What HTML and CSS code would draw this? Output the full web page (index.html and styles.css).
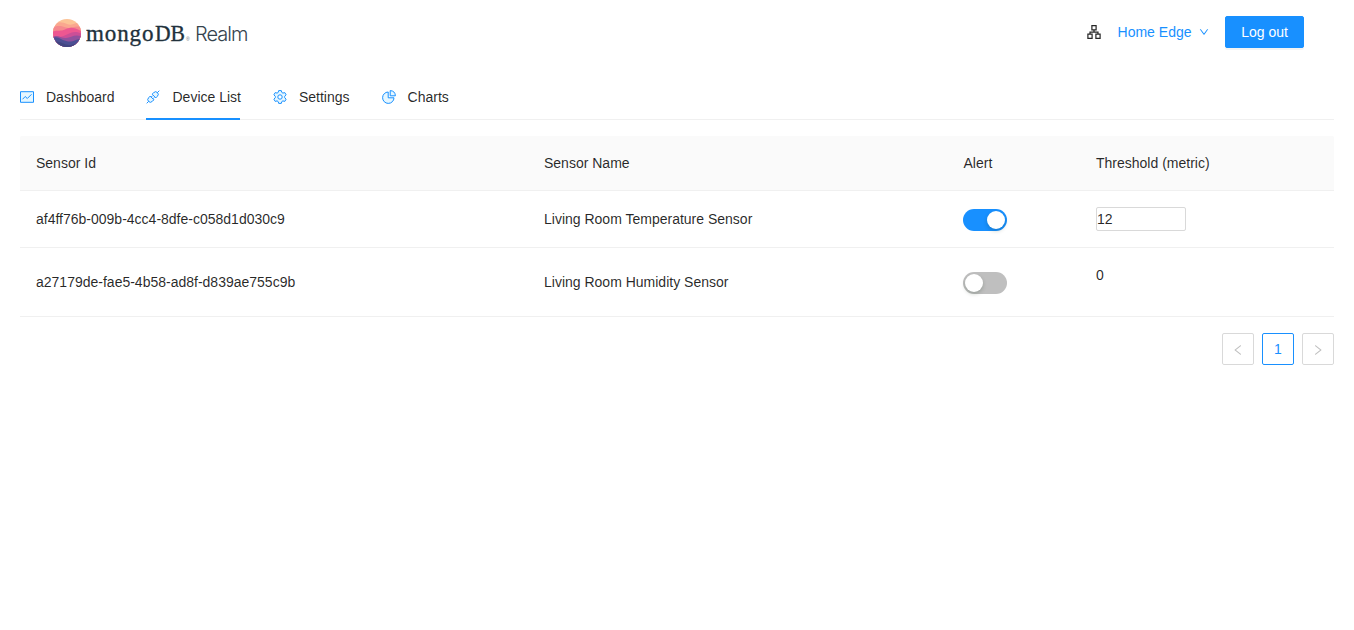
FILE: index.html
```html
<!DOCTYPE html>
<html lang="en">
<head>
<meta charset="utf-8">
<title>MongoDB Realm</title>
<link rel="stylesheet" href="styles.css">
</head>
<body>
<header class="header">
  <div class="brand">
    <svg class="brand-mark" viewBox="0 0 28 28">
      <defs><clipPath id="disc"><circle cx="14" cy="14" r="14"/></clipPath></defs>
      <g clip-path="url(#disc)">
        <rect width="28" height="28" fill="#fcc397"/>
        <path d="M0 6C5 2 9 3 14 5S22 4 28 3V28H0Z" fill="#faa78f"/>
        <path d="M0 8.500C5 6 9 7 13 8.500S22 6.500 28 8V28H0Z" fill="#f5898d"/>
        <path d="M0 12.500C5 11 8 12.500 12 10.500S20 7.500 28 12V28H0Z" fill="#ed5791"/>
        <path d="M0 18C6 18 9 18 14 15.500S22 12 28 14.500V28H0Z" fill="#cb4f97"/>
        <path d="M0 17.500C5 15.500 8 19.500 13 19S21 15 28 17V28H0Z" fill="#90519d"/>
        <path d="M0 19C5 16.500 9 22 15 22.500S23 20 28 20V28H0Z" fill="#4c4f93"/>
        <path d="M0 23C6 21 11 26 16 26S23 24 28 24V28H0Z" fill="#414681"/>
      </g>
    </svg>
    <svg class="brand-name" viewBox="0 0 164 32">
      <text class="mongo" x="0" y="23.500" textLength="67.500">mongo</text>
      <text class="mongo db" x="69" y="23.500" textLength="30" lengthAdjust="spacingAndGlyphs">DB</text>
      <text class="reg" x="100" y="23.500">®</text>
      <text class="realm" x="109" y="23.500" textLength="53.500">Realm</text>
    </svg>
  </div>
  <div class="account">
    <svg class="icon cluster" viewBox="0 0 14 14"><path d="M4.900.6h4.200v4.200H4.900ZM.9 9.200h4.200v4.200H.9ZM8.900 9.200h4.200v4.200H8.900ZM7 4.800v2.200M3 9.200V7.100h8v2.100"/></svg>
    <a class="edge">Home Edge
      <svg class="chevron" viewBox="64 64 896 896"><path d="M884 256h-75c-5.100 0-9.900 2.500-12.900 6.600L512 654.200 227.900 262.600c-3-4.100-7.800-6.600-12.900-6.600h-75c-6.500 0-10.300 7.400-6.500 12.700l352.600 486.100c12.800 17.600 39 17.600 51.700 0l352.600-486.100c3.900-5.300.1-12.700-6.400-12.700z"/></svg>
    </a>
    <button class="logout">Log out</button>
  </div>
</header>
<main class="content">
  <nav class="tabs">
    <a class="tab"><svg class="icon two-tone" viewBox="0 0 14 14"><path class="tint" d="M.5 1.700h13v10.600H.5Z"/><path d="M2.500 9.300 5.200 6.500 7.300 8.500 11.500 4.300"/></svg>Dashboard</a>
    <a class="tab active"><svg class="icon two-tone" viewBox="0 0 14 14"><path class="tint" d="M6.100 4.200 7.500 2.800A2.850 2.850 0 0 1 11.500 2.500 2.850 2.850 0 0 1 11.200 6.500L9.800 7.900ZM4.200 6.100 2.800 7.500A2.850 2.850 0 0 0 2.500 11.500 2.850 2.850 0 0 0 6.500 11.200L7.900 9.800Z"/><path d="M11.500 2.500 13.300.7M2.500 11.500.7 13.300M5.200 7.100 6.600 5.700M6.900 8.800 8.300 7.400"/></svg>Device List</a>
    <a class="tab"><svg class="icon two-tone" viewBox="0 0 14 14"><path class="tint" d="M5.700.6h2.600l.5 1.800 1.100.7 1.900-.5 1.300 2.200-1.400 1.500v1.400l1.400 1.500-1.300 2.200-1.900-.5-1.100.7-.5 1.800H5.700l-.5-1.800-1.100-.7-1.900.5L.9 9.200l1.400-1.500V6.300L.9 4.800l1.300-2.200 1.900.5 1.100-.7Z"/><circle class="hole" cx="7" cy="7" r="2.200"/></svg>Settings</a>
    <a class="tab"><svg class="icon two-tone" viewBox="0 0 14 14"><path class="tint" d="M6.200 2A5.700 5.700 0 1 0 12 7.800H6.200Z"/><path class="tint" d="M8.200.6A5.500 5.500 0 0 1 13.400 5.800H8.200Z"/></svg>Charts</a>
  </nav>
  <table class="devices">
    <colgroup><col class="col-id"><col class="col-name"><col class="col-alert"><col class="col-threshold"></colgroup>
    <thead>
      <tr><th>Sensor Id</th><th>Sensor Name</th><th>Alert</th><th>Threshold (metric)</th></tr>
    </thead>
    <tbody>
      <tr>
        <td>af4ff76b-009b-4cc4-8dfe-c058d1d030c9</td>
        <td>Living Room Temperature Sensor</td>
        <td><button class="switch on" role="switch" aria-checked="true" aria-label="Alert"></button></td>
        <td><input class="threshold" type="text" value="12" aria-label="Threshold"></td>
      </tr>
      <tr>
        <td>a27179de-fae5-4b58-ad8f-d839ae755c9b</td>
        <td>Living Room Humidity Sensor</td>
        <td><button class="switch" role="switch" aria-checked="false" aria-label="Alert"></button></td>
        <td><p class="value">0</p></td>
      </tr>
    </tbody>
  </table>
  <div class="pagination">
    <button class="page disabled" aria-label="Previous"><svg viewBox="64 64 896 896"><path d="M724 218.300V141c0-6.700-7.700-10.400-12.900-6.300L260.300 486.800a31.860 31.860 0 000 50.300l450.800 352.100c5.300 4.100 12.900.4 12.900-6.300v-77.300c0-4.900-2.300-9.600-6.100-12.600l-360-281 360-281.100c3.800-3 6.100-7.700 6.100-12.600z"/></svg></button>
    <button class="page current">1</button>
    <button class="page disabled" aria-label="Next"><svg viewBox="64 64 896 896"><path d="M765.700 486.800L314.900 134.700A7.970 7.970 0 00302 141v77.300c0 4.900 2.300 9.600 6.100 12.600l360 281.100-360 281.100c-3.900 3-6.100 7.700-6.100 12.600V883c0 6.700 7.700 10.400 12.900 6.300l450.800-352.100a31.960 31.960 0 000-50.400z"/></svg></button>
  </div>
</main>
</body>
</html>
```
FILE: styles.css
```css
* { box-sizing: border-box; }
body {
  margin: 0;
  background: #fff;
  color: rgba(0, 0, 0, .85);
  font: 14px/22px "Liberation Sans", Arial, sans-serif;
}
button { font: inherit; cursor: pointer; }
svg { display: block; flex: none; }

.header {
  height: 64px;
  padding: 0 50px 0 53px;
  display: flex;
  justify-content: space-between;
  align-items: center;
}
.brand { display: flex; align-items: center; gap: 5px; padding-top: 2px; }
.brand-mark { width: 28px; height: 28px; }
.brand-name { width: 164px; height: 32px; }
.mongo { font: 23px "Liberation Serif", serif; fill: #21313c; stroke: #21313c; stroke-width: .35px; }
.db { font-size: 24px; }
.reg { font: 5px "Liberation Sans", sans-serif; fill: #6a757d; }
.realm { font: 300 20px Inter, Roboto, sans-serif; fill: #35434d; }

.account { display: flex; align-items: center; }
.icon { width: 14px; height: 14px; fill: none; stroke-width: 1.2; }
.cluster { stroke: #262626; margin-right: 16.500px; }
.edge { display: flex; align-items: center; gap: 7.500px; color: #1890ff; margin-right: 16px; }
.chevron { width: 10px; height: 10px; fill: #1890ff; }
.logout {
  width: 79px;
  height: 32px;
  padding: 0;
  color: #fff;
  background: #1890ff;
  border: 1px solid #1890ff;
  border-radius: 2px;
  box-shadow: 0 2px 0 rgba(0, 0, 0, .045);
}

.content { padding: 10px 20px 0; }
.tabs {
  display: flex;
  gap: 32px;
  height: 46px;
  margin-bottom: 16px;
  box-shadow: inset 0 -1px #f0f0f0;
}
.tab { display: flex; align-items: center; gap: 12px; }
.active {
  gap: 12.500px;
  margin-left: -.500px;
  background: linear-gradient(#1890ff, #1890ff) left bottom / 94px 2px no-repeat;
}
.two-tone { stroke: #1890ff; stroke-width: 1; }
.tint { fill: #e6f7ff; }
.hole { fill: #fff; }

.devices { width: 100%; table-layout: fixed; border-collapse: separate; border-spacing: 0; }
.col-id { width: 508px; }
.col-name { width: 419.500px; }
.col-alert { width: 132.500px; }
.col-threshold { width: 254px; }
th, td { padding: 16px; text-align: left; vertical-align: middle; border-bottom: 1px solid #f0f0f0; }
th { font-weight: 400; background: #fafafa; }
th:first-child { border-top-left-radius: 2px; }
th:last-child { border-top-right-radius: 2px; }

.switch {
  display: flex;
  align-items: center;
  width: 44px;
  height: 22px;
  margin: 2px 0 0 -.600px;
  padding: 2px;
  border: 0;
  border-radius: 11px;
  background: #bfbfbf;
}
.switch::before {
  content: "";
  width: 18px;
  height: 18px;
  border-radius: 9px;
  background: #fff;
  box-shadow: 0 2px 4px rgba(0, 35, 11, .2);
}
.on { justify-content: flex-end; background: #1890ff; }
.threshold {
  display: block;
  width: 90px;
  height: 24px;
  padding: 0;
  font: inherit;
  color: inherit;
  border: 1px solid #d9d9d9;
  border-radius: 2px;
  outline: 0;
}
.value { margin: 0 0 14px; }

.pagination { display: flex; justify-content: flex-end; gap: 8px; margin-top: 16px; }
.page {
  display: flex;
  align-items: center;
  justify-content: center;
  width: 32px;
  height: 32px;
  padding: 0;
  border: 1px solid #d9d9d9;
  border-radius: 2px;
  background: #fff;
}
.page svg { width: 12px; height: 12px; margin-top: 2px; fill: #bfbfbf; }
.current { color: #1890ff; border-color: #1890ff; }
```
